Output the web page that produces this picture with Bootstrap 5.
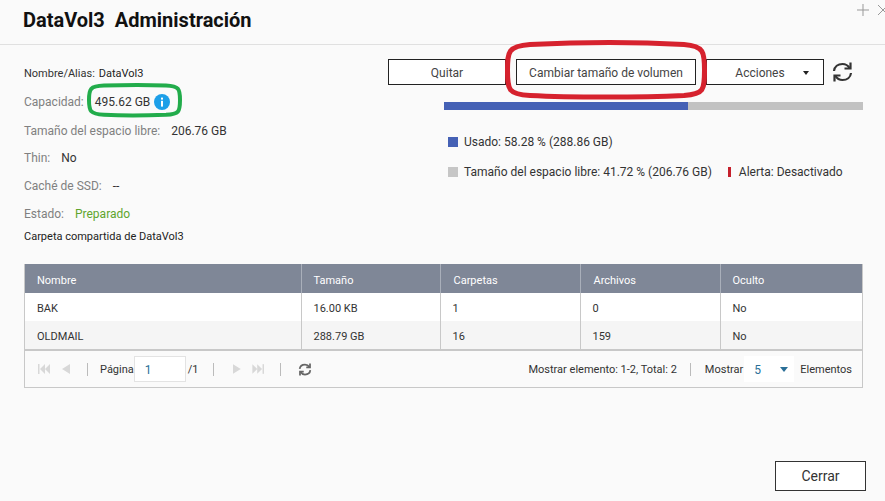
<!DOCTYPE html>
<html lang="es"><head><meta charset="utf-8"><title>DataVol3 Administración</title>
<link href="https://cdn.jsdelivr.net/npm/bootstrap@5.3.0/dist/css/bootstrap.min.css" rel="stylesheet">
<style>
html,body{margin:0;background:#fafafa;}
body{font-family:Roboto,"Liberation Sans",sans-serif;font-size:12px;color:#333;}
.shell{position:relative;width:885px;height:501px;overflow:hidden;background:#fafafa;}
.head{height:45px;border-bottom:1px solid #e0e0e0;padding-left:23px;}
.head h1{font-size:20px;font-weight:700;margin:0;line-height:41px;color:#111;white-space:pre;}
.winctl{margin:4px -4px 0 0;gap:8px;}
.work{padding:0 22px 0 24px;}
.topz{height:204px;}
.leftz{width:364px;}
.inf{height:28px;line-height:28px;white-space:nowrap;}
.inf-n{line-height:30px;}
.inf-m{line-height:29px;}
.inf .k{color:#808080;font-size:12px;}
.inf .v{color:#333;margin-left:11px;}
.inf-a{height:29px;line-height:29px;margin-top:14px;color:#222;font-size:11px;}
.inf .cap{margin-left:11px;}
.info{margin-left:1px;}
.inf-a .v{margin-left:4px;color:#222;}
.inf-a .k{color:#333;font-size:11px;}
.inf-b{height:18px;line-height:18px;color:#222;font-size:11px;}
.inf .ok{color:#5fa52e;}
.rightz{flex:1;padding-top:14px;}
.actbtn{height:26px;background:#fff;border:1px solid #222;border-radius:0;color:#444;font-size:12px;padding:1px 0 0;line-height:24px;}
.actbtn:hover{background:#fff;color:#444;border-color:#222;}
.b1{width:118px;}.b2{width:180px;margin:0 10px;}.b3{width:118px;padding-left:14px;}
.caret{display:inline-block;border-top:4px solid #222;border-left:3px solid transparent;border-right:3px solid transparent;margin-left:18px;vertical-align:2px;}
.sync{margin-left:8px;}
.bar{height:8px;margin:17px 0 0 56px;background:#c2c2c2;border-radius:0;}
.bar .progress-bar{background:#4561b5;}
.leg{margin:0 0 0 60px;height:30px;line-height:30px;white-space:nowrap;color:#333;}
.leg1{margin-top:17px;}
.sw{display:inline-block;width:10px;height:10px;margin-right:6px;vertical-align:-1px;}
.sw-u{background:#4561b5;}.sw-f{background:#c6c6c6;}
.sw-a{display:inline-block;width:3px;height:10px;background:#c5202c;margin:0 8px 0 16px;vertical-align:-1px;}
.gridwrap{margin-top:15px;border-left:1px solid #c8c8c8;border-right:1px solid #c8c8c8;border-bottom:1px solid #c8c8c8;}
table.vt{margin:0;table-layout:fixed;width:100%;font-size:11px;border-collapse:collapse;border-bottom:2px solid #c8c8c8;}
table.vt th{background:#7f8797;color:#fff;font-weight:400;height:29px;padding:5px 12px 0;border:0;border-left:1px solid #a9afba;vertical-align:middle;}
table.vt th:nth-child(3),table.vt th:nth-child(4){padding-left:13px;}
table.vt td{height:28px;padding:4px 12px 0;border:0;border-left:1px solid #c8c8c8;color:#333;background:#fff;vertical-align:middle;box-shadow:none;}
table.vt tr.alt td{background:#f5f5f5;height:29px;padding-top:4px;}
table.vt th:first-child,table.vt td:first-child{border-left:0;}
.pager{height:36px;padding:0 10px 0 13px;background:#fafafa;font-size:11px;color:#333;white-space:nowrap;}
.pager>.tx{padding-top:3px;}
.vsep{width:1px;height:13px;background:#bbb;}
.sa{margin-left:17px;}.sb{margin-left:12px;}.sc{margin-left:2px;}.sd{margin-left:14px;}.se{margin-left:19px;}.sf{margin-left:6px;}.sg{margin:0 14px 0 13px;}.sh{margin-left:1px;}.si{margin-left:16px;}
.pinp{width:52px;height:26px;background:#fff;border:1px solid #e3e3e3;color:#2a6f97;font-size:12px;padding:4px 0 0 10px;}
.psel{width:50px;height:26px;background:#fff;color:#2a6f97;font-size:12px;padding:1px 6px 0 10px;}
.tri{border-top:5px solid #2a6f97;border-left:4px solid transparent;border-right:4px solid transparent;}
.foot{padding-top:73px;margin-right:-3px;}
.closebtn{width:91px;height:30px;background:#fff;border:1px solid #333;border-radius:0;color:#333;font-size:14px;padding:0;}
.marks{position:absolute;left:0;top:0;pointer-events:none;}
</style></head><body>
<div class="shell">
 <div class="head d-flex justify-content-between">
  <h1>DataVol3  Administración</h1>
  <div class="winctl d-flex align-items-start">
   <svg width="12" height="12" viewBox="0 0 12 12"><path d="M6 0V12M0 6H12" stroke="#999" stroke-width="1" fill="none"/></svg>
   <svg width="12" height="12" viewBox="0 0 12 12"><path d="M1 1L11 11M11 1L1 11" stroke="#999" stroke-width="1" fill="none"/></svg>
  </div>
 </div>
 <div class="work">
  <div class="topz d-flex">
   <div class="leftz">
    <div class="inf inf-a"><span class="k">Nombre/Alias:</span><span class="v">DataVol3</span></div>
    <div class="inf"><span class="k">Capacidad:</span><span class="v cap">495.62 GB</span>
      <svg class="info" width="16" height="16" viewBox="0 0 16 16" style="vertical-align:-4px"><circle cx="8" cy="8" r="8" fill="#1d9fe8"/><rect x="7" y="6.800" width="2" height="5.800" fill="#fff"/><rect x="7" y="3.600" width="2" height="2" fill="#fff"/></svg></div>
    <div class="inf inf-n"><span class="k">Tamaño del espacio libre:</span><span class="v">206.76 GB</span></div>
    <div class="inf inf-m"><span class="k">Thin:</span><span class="v">No</span></div>
    <div class="inf inf-m"><span class="k">Caché de SSD:</span><span class="v">--</span></div>
    <div class="inf inf-m"><span class="k">Estado:</span><span class="v ok">Preparado</span></div>
    <div class="inf-b">Carpeta compartida de DataVol3</div>
   </div>
   <div class="rightz">
    <div class="d-flex align-items-center">
     <button class="btn actbtn b1">Quitar</button>
     <button class="btn actbtn b2">Cambiar tamaño de volumen</button>
     <button class="btn actbtn b3">Acciones<span class="caret"></span></button>
     <svg class="sync" width="21" height="24" viewBox="0 0 21 24" fill="none" stroke="#333" stroke-width="2.200"><path d="M2 11C2.500 6.500 6 4 10.500 4C13.500 4 16 5.500 17.500 8"/><path d="M18.500 2.500V8.500H12.500"/><path d="M19 13C18.500 17.500 15 20 10.500 20C7.500 20 5 18.500 3.500 16"/><path d="M2.500 21.500V15.500H8.500"/></svg>
    </div>
    <div class="progress bar" role="progressbar"><div class="progress-bar" style="width:58.28%"></div></div>
    <div class="leg leg1"><span class="sw sw-u"></span>Usado: 58.28 % (288.86 GB)</div>
    <div class="leg"><span class="sw sw-f"></span>Tamaño del espacio libre: 41.72 % (206.76 GB)<span class="sw-a"></span>Alerta: Desactivado</div>
   </div>
  </div>
  <div class="gridwrap">
   <table class="table vt">
    <colgroup><col style="width:276px"><col style="width:139px"><col style="width:140px"><col style="width:140px"><col></colgroup>
    <thead><tr><th>Nombre</th><th>Tamaño</th><th>Carpetas</th><th>Archivos</th><th>Oculto</th></tr></thead>
    <tbody>
     <tr><td>BAK</td><td>16.00 KB</td><td>1</td><td>0</td><td>No</td></tr>
     <tr class="alt"><td>OLDMAIL</td><td>288.79 GB</td><td>16</td><td>159</td><td>No</td></tr>
    </tbody>
   </table>
   <div class="pager d-flex align-items-center">
    <svg width="32" height="10" viewBox="0 0 32 10" fill="#d8d8d8"><rect x="0" y="0" width="1.500" height="10"/><path d="M7 0V10L2 5ZM12 0V10L7 5ZM32 0V10L24 5Z"/></svg>
    <span class="vsep sa"></span>
    <span class="sb tx">Página</span>
    <span class="pinp">1</span>
    <span class="sc tx">/1</span>
    <span class="vsep sd"></span>
    <svg class="se" width="31" height="10" viewBox="0 0 32 10" fill="#d8d8d8"><path d="M0 0V10L8 5ZM20 0V10L25 5ZM25 0V10L30 5Z"/><rect x="30.500" y="0" width="1.500" height="10"/></svg>
    <span class="vsep si"></span>
    <svg class="sa" width="14" height="15" viewBox="0 0 21 24" fill="none" stroke="#666" stroke-width="2.800"><path d="M2 11C2.500 6.500 6 4 10.500 4C13.500 4 16 5.500 17.500 8"/><path d="M18.500 2.500V8.500H12.500"/><path d="M19 13C18.500 17.500 15 20 10.500 20C7.500 20 5 18.500 3.500 16"/><path d="M2.500 21.500V15.500H8.500"/></svg>
    <span class="ms-auto tx">Mostrar elemento: 1-2, Total: 2</span>
    <span class="vsep sg"></span>
    <span class="tx">Mostrar</span>
    <span class="psel sh d-flex align-items-center justify-content-between"><span>5</span><span class="tri"></span></span>
    <span class="sf tx">Elementos</span>
   </div>
  </div>
  <div class="foot d-flex justify-content-end"><button class="btn closebtn">Cerrar</button></div>
 </div>
 <svg class="marks" width="885" height="501" viewBox="0 0 885 501" fill="none">
  <path d="M507.500 70C507.500 52 508 46 530 44.500C580 42 640 42 684 44.500C704 46 704.500 52 704.500 70C704.500 90 704 94 684 95.500C640 97.500 570 97.500 530 95.500C508 94 507.500 90 507.500 70Z" stroke="#d6222e" stroke-width="5"/>
  <path d="M89 100C89 89 90 86 104 85.500C125 85 150 85 166 85.500C179 86 180 89 180 100C180 112 179 114 166 114.800C145 115.500 120 115.500 104 114.800C90 114 89 111 89 100Z" stroke="#22ac4b" stroke-width="4"/>
 </svg>
</div>
<script src="https://cdn.jsdelivr.net/npm/bootstrap@5.3.0/dist/js/bootstrap.bundle.min.js"></script>
</body></html>
